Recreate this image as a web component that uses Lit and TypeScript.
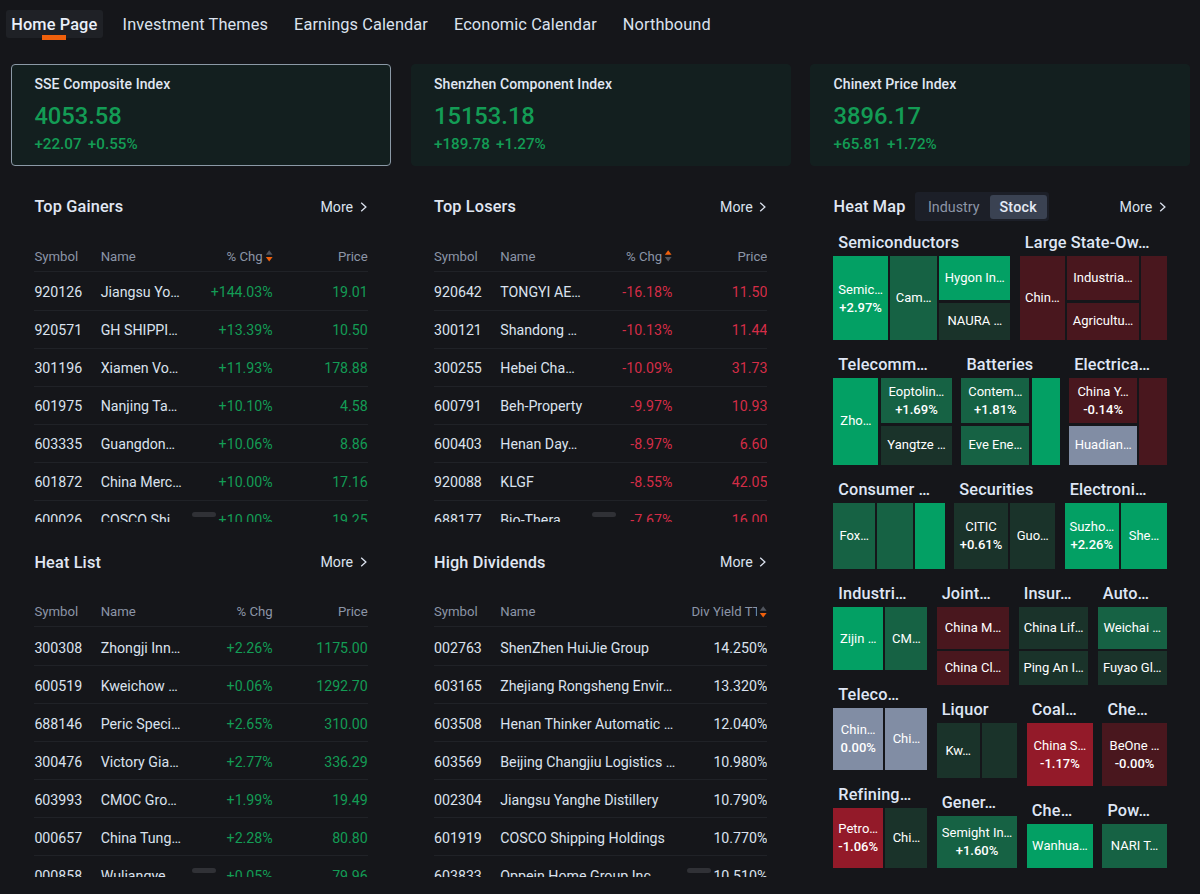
import { LitElement, html, css, svg, nothing } from "lit";
import { customElement, property } from "lit/decorators.js";
import { classMap } from "lit/directives/class-map.js";
import { styleMap } from "lit/directives/style-map.js";

type Row = [string, string, string, string?];
type Tone = "up3" | "up2" | "up1" | "flat" | "dn1" | "dn2";
interface Cell { h?: number; tone: Tone; name?: string; pct?: string; }
interface Group { title: string; h: number; cols: [number, Cell[]][]; }
interface Stack { groups: Group[]; }

const c = (tone: Tone, name?: string, pct?: string, h?: number): Cell => ({ tone, name, pct, h });
const g = (title: string, h: number, ...cols: [number, Cell[]][]): Group => ({ title, h, cols });

const row1: Group[] = [
  g("Semiconductors", 84,
    [54.7, [c("up3", "Semic…", "+2.97%")]],
    [46.4, [c("up2", "Cam…")]],
    [71.3, [c("up3", "Hygon In…", undefined, 44), c("up1", "NAURA …", undefined, 37.6)]]),
  g("Large State-Ow…", 84,
    [45, [c("dn1", "Chin…")]],
    [71.6, [c("dn1", "Industria…", undefined, 44), c("dn1", "Agricultu…", undefined, 37.6)]],
    [26.2, [c("dn1")]]),
];
const row2: Group[] = [
  g("Telecomm…", 86.6,
    [45.2, [c("up3", "Zho…")]],
    [71.2, [c("up2", "Eoptolin…", "+1.69%", 45.2), c("up1", "Yangtze …", undefined, 39)]]),
  g("Batteries", 86.6,
    [67.8, [c("up2", "Contem…", "+1.81%", 45.2), c("up2", "Eve Ene…", undefined, 39)]],
    [28.2, [c("up3")]]),
  g("Electrica…", 86.6,
    [67.8, [c("dn1", "China Y…", "-0.14%", 45.2), c("flat", "Huadian…", undefined, 39)]],
    [27.2, [c("dn1")]]),
];
const row3: Group[] = [
  g("Consumer …", 66.4, [41.8, [c("up2", "Fox…")]], [35.5, [c("up2")]], [29.6, [c("up3")]]),
  g("Securities", 66.4, [53.4, [c("up1", "CITIC", "+0.61%")]], [45.2, [c("up1", "Guo…")]]),
  g("Electroni…", 66.4, [54.2, [c("up3", "Suzho…", "+2.26%")]], [45.4, [c("up3", "She…")]]),
];
const left: Group[] = [
  g("Industri…", 63, [49.8, [c("up3", "Zijin …")]], [41.8, [c("up2", "CM…")]]),
  g("Teleco…", 61.6, [49.8, [c("flat", "Chin…", "0.00%")]], [41.8, [c("flat", "Chi…")]]),
  g("Refining…", 60.4, [49.8, [c("dn2", "Petro…", "-1.06%")]], [41.8, [c("up1", "Chi…")]]),
];
const pair = (title: string, w: number, t1: Tone, n1: string, t2: Tone, n2: string) =>
  g(title, 78.3, [w, [c(t1, n1, undefined, 41.8), c(t2, n2, undefined, 34.1)]]);
const mid: Group[] = [
  pair("Joint…", 72.6, "dn1", "China M…", "dn1", "China Cl…"),
  pair("Insur…", 69.8, "up1", "China Lif…", "up1", "Ping An I…"),
  pair("Auto…", 68.8, "up2", "Weichai …", "up1", "Fuyao Gl…"),
];
const low: Stack[] = [
  { groups: [
    g("Liquor", 54.6, [43, [c("up1", "Kw…")]], [35.4, [c("up1")]]),
    g("Gener…", 51.6, [80.8, [c("up2", "Semight In…", "+1.60%")]])] },
  { groups: [
    g("Coal…", 62.4, [66.2, [c("dn2", "China S…", "-1.17%")]]),
    g("Che…", 43.8, [66.2, [c("up3", "Wanhua…")]])] },
  { groups: [
    g("Che…", 62.4, [64.2, [c("dn1", "BeOne …", "-0.00%")]]),
    g("Pow…", 43.8, [64.2, [c("up2", "NARI T…")]])] },
];

const base = css`
  * { box-sizing: border-box; }
  .more { display: flex; align-items: center; font-size: 14.2px; color: #dbe2ee; gap: 6.5px; }
  .more svg { display: block; }
  .head { display: flex; align-items: center; justify-content: space-between; height: 29px; }
  h2 { margin: 0; font-size: 16.3px; font-weight: 500; color: #e0e7f3; letter-spacing: 0.15px; }
`;
const more = html`<div class="more"><span>More</span><svg width="8" height="12" viewBox="0 0 8 12" fill="none" stroke="#dbe2ee" stroke-width="1.3"><path d="M1.2 1.7 5.9 6 1.2 10.3"/></svg></div>`;

@customElement("stock-table")
class StockTable extends LitElement {
  @property() heading = "";
  @property() sort = "";
  @property() tone = "up";
  @property({ type: Boolean }) wide = false;
  @property({ attribute: false }) rows: Row[] = [];
  static styles = [base, css`
    :host { display: block; height: 355.7px; padding: 0 23.4px; }
    .view { height: 281px; margin-top: 19.5px; overflow: hidden; position: relative; }
    .tr { display: grid; grid-template-columns: 66.3px 90px 82px 95.1px; height: 38px; padding-top: 2px; align-items: center;
      border-bottom: 1px solid #202227; font-size: 14.2px; color: #dbe2ee; white-space: nowrap; }
    .wide .tr { grid-template-columns: 66.3px 181px 86.1px; }
    .th + .tr { height: 39px; padding-top: 3px; }
    .th.tr { height: 31px; padding-top: 1px; font-size: 13.2px; color: #8c95a7; }
    .num { text-align: right; justify-self: end; }
    .up .num { color: #139c55; }
    .down .num { color: #d42d47; }
    .wide .num { color: #dbe2ee; }
    .th.tr .num { color: #8c95a7; display: flex; align-items: center; gap: 2px; }
    .clip { display: block; width: 66px; overflow: hidden; text-align: left; }
    .grip { position: absolute; left: 158px; top: 271.5px; width: 24px; height: 5px; border-radius: 3px; background: #303136; }
    .wide .grip { left: 253px; }
  `];
  arrows() {
    if (!this.sort) return nothing;
    const hot = "#f0600c", cold = "#50545d";
    return html`<svg width="8" height="12" viewBox="0 0 8 12">
      ${svg`<path fill=${this.sort === "asc" ? hot : cold} d="M4.2 .2 7.6 4.8H.8Z"/><path fill=${this.sort === "desc" ? hot : cold} d="M4.2 11.6 7.6 6.9H.8Z"/>`}
    </svg>`;
  }
  render() {
    return html`
      <div class="head"><h2>${this.heading}</h2>${more}</div>
      <div class=${classMap({ view: true, up: this.tone === "up", down: this.tone === "down", wide: this.wide })}>
        <div class="tr th">
          <span>Symbol</span><span>Name</span>
          ${this.wide
            ? html`<span class="num"><span class="clip">Div Yield TTM</span>${this.arrows()}</span>`
            : html`<span class="num"><span>% Chg</span>${this.arrows()}</span><span class="num">Price</span>`}
        </div>
        ${this.rows.map(([s, n, a, b]) => html`<div class="tr">
          <span>${s}</span><span>${n}</span><span class="num">${a}</span>
          ${b ? html`<span class="num">${b}</span>` : nothing}
        </div>`)}
        <div class="grip"></div>
      </div>`;
  }
}

@customElement("heat-map")
class HeatMap extends LitElement {
  static styles = [base, css`
    :host { display: block; padding: 0 23.4px; }
    .lead { display: flex; align-items: center; gap: 10px; }
    .seg { display: flex; align-items: center; height: 29px; padding: 2px 2.5px; background: #1c1f28; border-radius: 3px; font-size: 14.3px; color: #8c95a7; }
    .seg span { height: 24px; line-height: 25px; padding: 0 10px; border-radius: 3px; }
    .seg .on { background: #3a4252; color: #e4eaf5; font-weight: 500; letter-spacing: 0.2px; }
    .map { display: flex; flex-direction: column; gap: 10px; margin: 7.2px 0 0 -0.3px; }
    .row { display: flex; gap: 9.4px; }
    .col { display: flex; flex-direction: column; gap: 10px; }
    .title { height: 28px; line-height: 29px; padding-left: 5px; font-size: 16.25px; font-weight: 500; color: #dfe6f5; white-space: nowrap; letter-spacing: 0.15px; }
    .tiles { display: flex; gap: 2.4px; }
    .stack { display: flex; flex-direction: column; gap: 2.4px; height: 100%; }
    .cell { flex: 1 1 auto; display: flex; flex-direction: column; align-items: center; justify-content: center;
      font-size: 13px; line-height: 18px; color: #fff; white-space: nowrap; overflow: hidden; }
    .cell:has(b) { padding-top: 1px; }
    .cell b { font-weight: 500; }
    .up3 { background: #03a064; } .up2 { background: #166244; } .up1 { background: #1a332a; }
    .flat { background: #818da4; } .dn1 { background: #49171e; } .dn2 { background: #931a29; }
  `];
  group(x: Group) {
    return html`<div>
      <div class="title">${x.title}</div>
      <div class="tiles" style=${styleMap({ height: `${x.h}px` })}>
        ${x.cols.map(([w, cells]) => html`<div class="stack" style=${styleMap({ width: `${w}px` })}>
          ${cells.map((k) => html`<div class="cell ${k.tone}" style=${styleMap(k.h ? { flex: `0 0 ${k.h}px` } : {})}>
            ${k.name ? html`<span>${k.name}</span>` : nothing}${k.pct ? html`<b>${k.pct}</b>` : nothing}
          </div>`)}
        </div>`)}
      </div>
    </div>`;
  }
  render() {
    const row = (gs: Group[]) => html`<div class="row">${gs.map((x) => this.group(x))}</div>`;
    return html`
      <div class="head">
        <div class="lead"><h2>Heat Map</h2><div class="seg"><span>Industry</span><span class="on">Stock</span></div></div>
        ${more}
      </div>
      <div class="map">
        ${row(row1)}${row(row2)}${row(row3)}
        <div class="row">
          <div class="col">${left.map((x) => this.group(x))}</div>
          <div class="col">
            ${row(mid)}
            <div class="row">${low.map((s) => html`<div class="col">${s.groups.map((x) => this.group(x))}</div>`)}</div>
          </div>
        </div>
      </div>`;
  }
}

const gainers: Row[] = [
  ["920126", "Jiangsu Yo…", "+144.03%", "19.01"], ["920571", "GH SHIPPI…", "+13.39%", "10.50"],
  ["301196", "Xiamen Vo…", "+11.93%", "178.88"], ["601975", "Nanjing Ta…", "+10.10%", "4.58"],
  ["603335", "Guangdon…", "+10.06%", "8.86"], ["601872", "China Merc…", "+10.00%", "17.16"],
  ["600026", "COSCO Shi…", "+10.00%", "19.25"]];
const losers: Row[] = [
  ["920642", "TONGYI AE…", "-16.18%", "11.50"], ["300121", "Shandong …", "-10.13%", "11.44"],
  ["300255", "Hebei Cha…", "-10.09%", "31.73"], ["600791", "Beh-Property", "-9.97%", "10.93"],
  ["600403", "Henan Day…", "-8.97%", "6.60"], ["920088", "KLGF", "-8.55%", "42.05"],
  ["688177", "Bio-Thera", "-7.67%", "16.00"]];
const heat: Row[] = [
  ["300308", "Zhongji Inn…", "+2.26%", "1175.00"], ["600519", "Kweichow …", "+0.06%", "1292.70"],
  ["688146", "Peric Speci…", "+2.65%", "310.00"], ["300476", "Victory Gia…", "+2.77%", "336.29"],
  ["603993", "CMOC Gro…", "+1.99%", "19.49"], ["000657", "China Tung…", "+2.28%", "80.80"],
  ["000858", "Wuliangye", "+0.05%", "79.96"]];
const dividends: Row[] = [
  ["002763", "ShenZhen HuiJie Group", "14.250%"], ["603165", "Zhejiang Rongsheng Envir…", "13.320%"],
  ["603508", "Henan Thinker Automatic …", "12.040%"], ["603569", "Beijing Changjiu Logistics …", "10.980%"],
  ["002304", "Jiangsu Yanghe Distillery", "10.790%"], ["601919", "COSCO Shipping Holdings", "10.770%"],
  ["603833", "Oppein Home Group Inc.", "10.510%"]];

@customElement("app-root")
class AppRoot extends LitElement {
  static styles = css`
    * { box-sizing: border-box; }
    :host { display: block; width: 1200px; height: 894px; overflow: hidden; background: #15161a; color: #dbe2ee;
      font-family: Roboto, sans-serif; }
    nav { display: flex; align-items: center; height: 64px; padding: 0 0 17px 6px; font-size: 16.35px; letter-spacing: 0.1px; }
    nav span { height: 28px; line-height: 29px; margin-right: 26px; white-space: nowrap; }
    nav .on { position: relative; padding: 0 5.3px; margin-right: 20px; background: #1f2126; border-radius: 3px; font-weight: 500; color: #eaf0fa; }
    nav .on::after { content: ""; position: absolute; left: 50%; bottom: -2.5px; width: 24px; height: 5px; margin-left: -12px; background: #f0600c; }
    .grid { display: grid; grid-template-columns: repeat(3, 380px); column-gap: 19.6px; margin-left: 11px; }
    .card { height: 102px; padding: 9.6px 22.4px; background: #131f1f; border: 1px solid #131f1f; border-radius: 4px; white-space: nowrap; }
    .card.on { border-color: #8b99a6; }
    .name { font-size: 14px; line-height: 19px; font-weight: 500; letter-spacing: 0.1px; color: #e0e7f3; }
    .val { font-size: 23.7px; line-height: 30px; margin-top: 7.6px; font-weight: 500; color: #139c55; }
    .chg { font-size: 15.2px; line-height: 20px; margin-top: 2.5px; font-weight: 500; color: #139c55; word-spacing: 2.5px; }
    .panels { margin-top: 26px; }
  `;
  render() {
    const cards = [
      ["SSE Composite Index", "4053.58", "+22.07 +0.55%"],
      ["Shenzhen Component Index", "15153.18", "+189.78 +1.27%"],
      ["Chinext Price Index", "3896.17", "+65.81 +1.72%"]];
    return html`
      <nav><span class="on">Home Page</span>${["Investment Themes", "Earnings Calendar", "Economic Calendar", "Northbound"].map((t) => html`<span>${t}</span>`)}</nav>
      <div class="grid">
        ${cards.map(([n, v, d], i) => html`<div class=${classMap({ card: true, on: i === 0 })}>
          <div class="name">${n}</div><div class="val">${v}</div><div class="chg">${d}</div></div>`)}
      </div>
      <div class="grid panels">
        <div>
          <stock-table heading="Top Gainers" sort="desc" .rows=${gainers}></stock-table>
          <stock-table heading="Heat List" .rows=${heat}></stock-table>
        </div>
        <div>
          <stock-table heading="Top Losers" sort="asc" tone="down" .rows=${losers}></stock-table>
          <stock-table heading="High Dividends" sort="desc" wide .rows=${dividends}></stock-table>
        </div>
        <heat-map></heat-map>
      </div>`;
  }
}
